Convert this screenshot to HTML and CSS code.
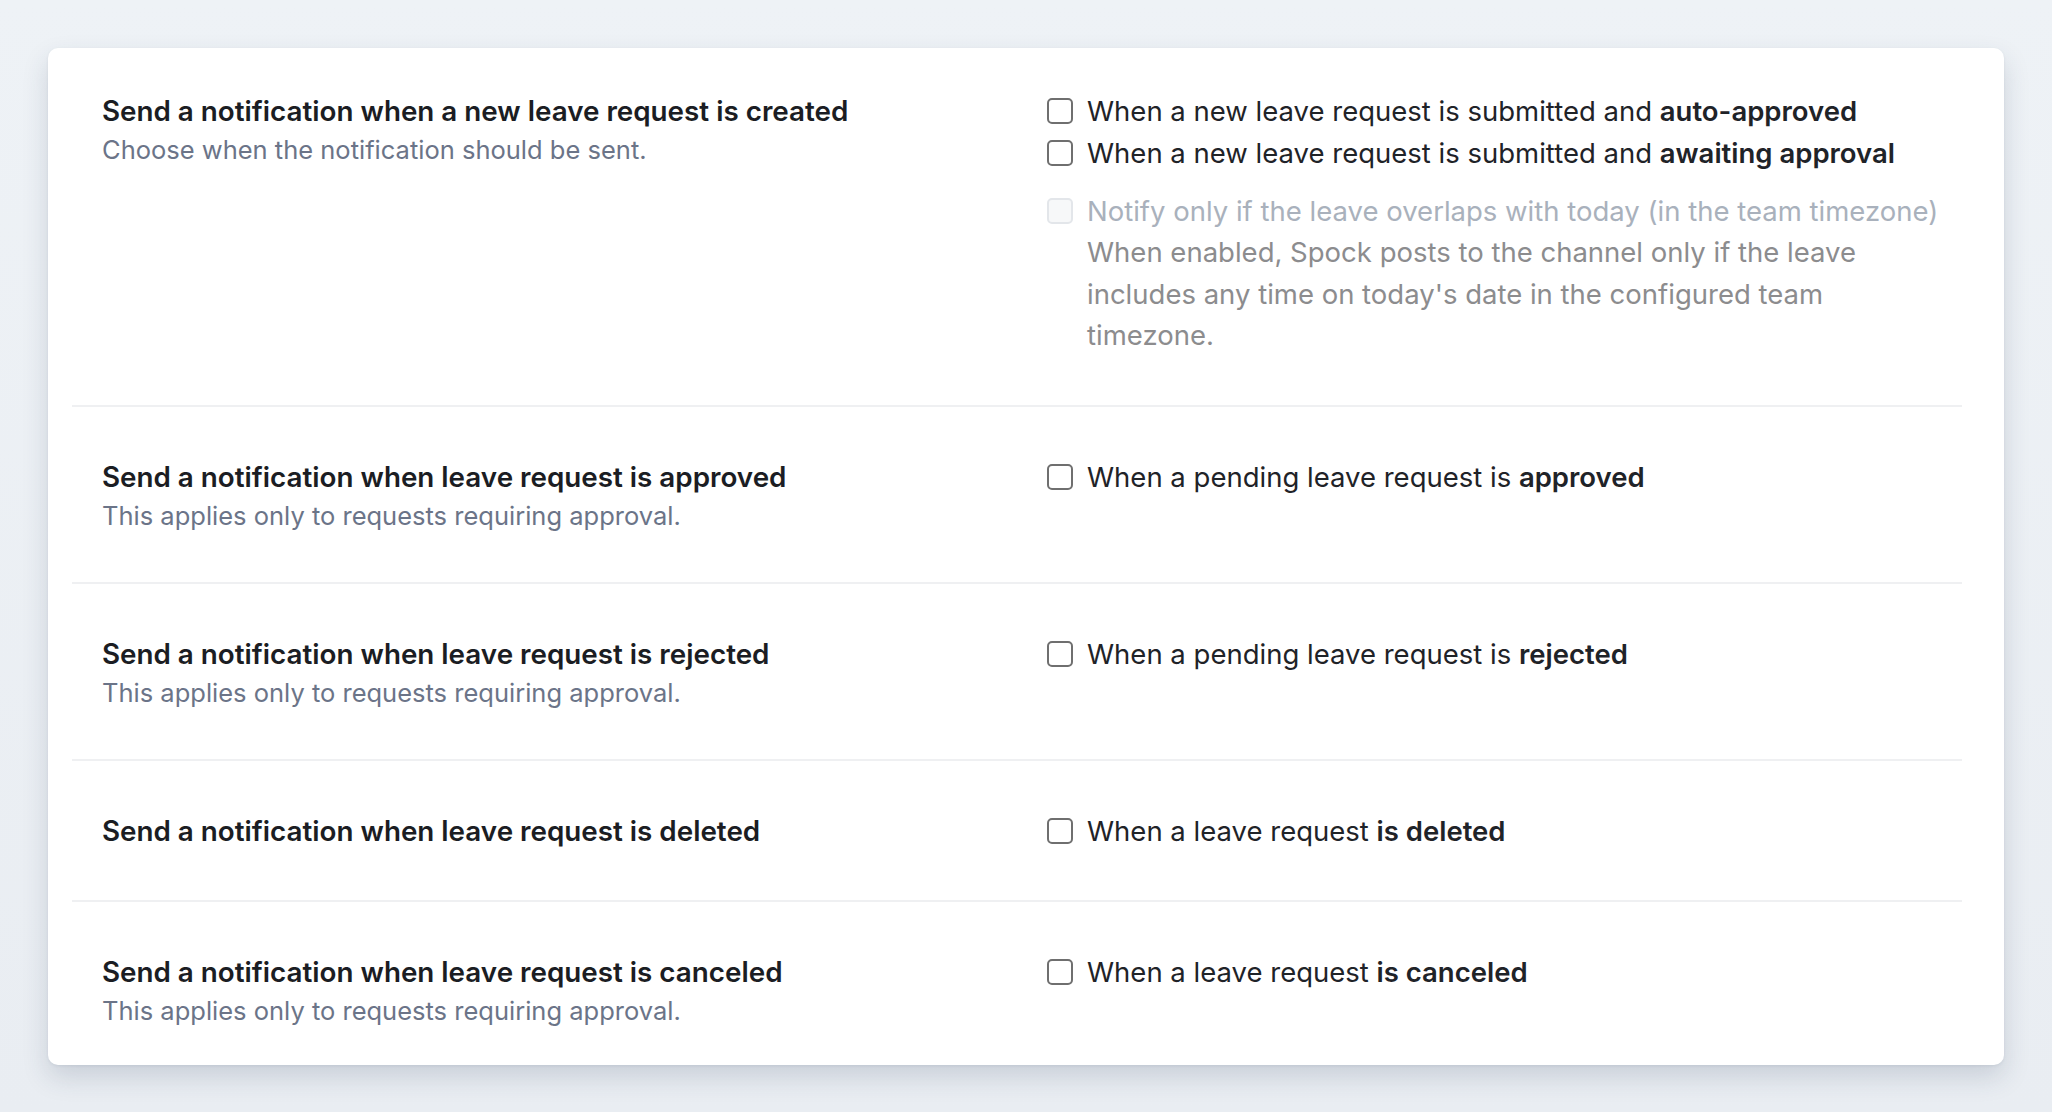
FILE: index.html
```html
<!DOCTYPE html>
<html lang="en">
<head>
    <meta charset="UTF-8">
    <meta name="viewport" content="width=device-width, initial-scale=1.0">
    <title>Leave notifications</title>
    <link rel="stylesheet" href="styles.css">
</head>
<body>
    <div class="card">
        <div class="row">
            <div class="info">
                <div class="title">Send a notification when a new leave request is created</div>
                <div class="hint">Choose when the notification should be sent.</div>
            </div>
            <div class="options">
                <label class="opt"><span class="box"></span><span>When a new leave request is submitted and <b>auto-approved</b></span></label>
                <label class="opt"><span class="box"></span><span>When a new leave request is submitted and <b>awaiting approval</b></span></label>
                <label class="opt opt-disabled"><span class="box"></span><span>Notify only if the leave overlaps with today (in the team timezone)</span></label>
                <div class="opt-desc">When enabled, Spock posts to the channel only if the leave includes any time on today's date in the configured team timezone.</div>
            </div>
        </div>

        <div class="row">
            <div class="info">
                <div class="title">Send a notification when leave request is approved</div>
                <div class="hint">This applies only to requests requiring approval.</div>
            </div>
            <div class="options">
                <label class="opt"><span class="box"></span><span>When a pending leave request is <b>approved</b></span></label>
            </div>
        </div>

        <div class="row">
            <div class="info">
                <div class="title">Send a notification when leave request is rejected</div>
                <div class="hint">This applies only to requests requiring approval.</div>
            </div>
            <div class="options">
                <label class="opt"><span class="box"></span><span>When a pending leave request is <b>rejected</b></span></label>
            </div>
        </div>

        <div class="row">
            <div class="info">
                <div class="title">Send a notification when leave request is deleted</div>
            </div>
            <div class="options">
                <label class="opt"><span class="box"></span><span>When a leave request <b>is deleted</b></span></label>
            </div>
        </div>

        <div class="row">
            <div class="info">
                <div class="title">Send a notification when leave request is canceled</div>
                <div class="hint">This applies only to requests requiring approval.</div>
            </div>
            <div class="options">
                <label class="opt"><span class="box"></span><span>When a leave request <b>is canceled</b></span></label>
            </div>
        </div>
    </div>
</body>
</html>
```

FILE: styles.css
```css
html, body { height: 100%; }
body { margin: 0; padding: 48px; box-sizing: border-box; font-family: Inter, "Noto Sans", sans-serif; font-size: 27.5px; color: #1f2328; background: linear-gradient(180deg, #eef2f6 0%, #e9edf2 100%); }

.card { background: #fff; border-radius: 10px; padding: 0 42px 0 24px; box-shadow: 0 12px 26px rgba(40, 60, 90, 0.17), 0 1px 3px rgba(40, 60, 90, 0.08); }

.row { display: grid; grid-template-columns: minmax(0, 1fr) minmax(0, 1fr); column-gap: 60px; padding: 49px 30px 48px; border-bottom: 2px solid #eff0f2; }
.row:first-child { padding-top: 42px; }
.row:last-child { border-bottom: none; padding-bottom: 36px; }

.title { font-size: 27.8px; font-weight: 600; line-height: 42px; color: #1b1d23; }
.hint { font-size: 25.5px; line-height: 36px; color: #6b7488; }

.opt { display: flex; align-items: center; gap: 14px; line-height: 42px; white-space: nowrap; }
.opt b { font-weight: 600; color: #1f2328; }
.box { flex: none; width: 22px; height: 22px; border: 2px solid #6f6f6f; border-radius: 5px; background: #fff; }

.opt-disabled { margin-top: 16px; color: #a9b1bc; }
.opt-disabled .box { border-color: #e3e6ea; background: #f7f8f9; }
.opt-desc { padding-left: 40px; line-height: 41.5px; color: #8c8c8e; }
```
